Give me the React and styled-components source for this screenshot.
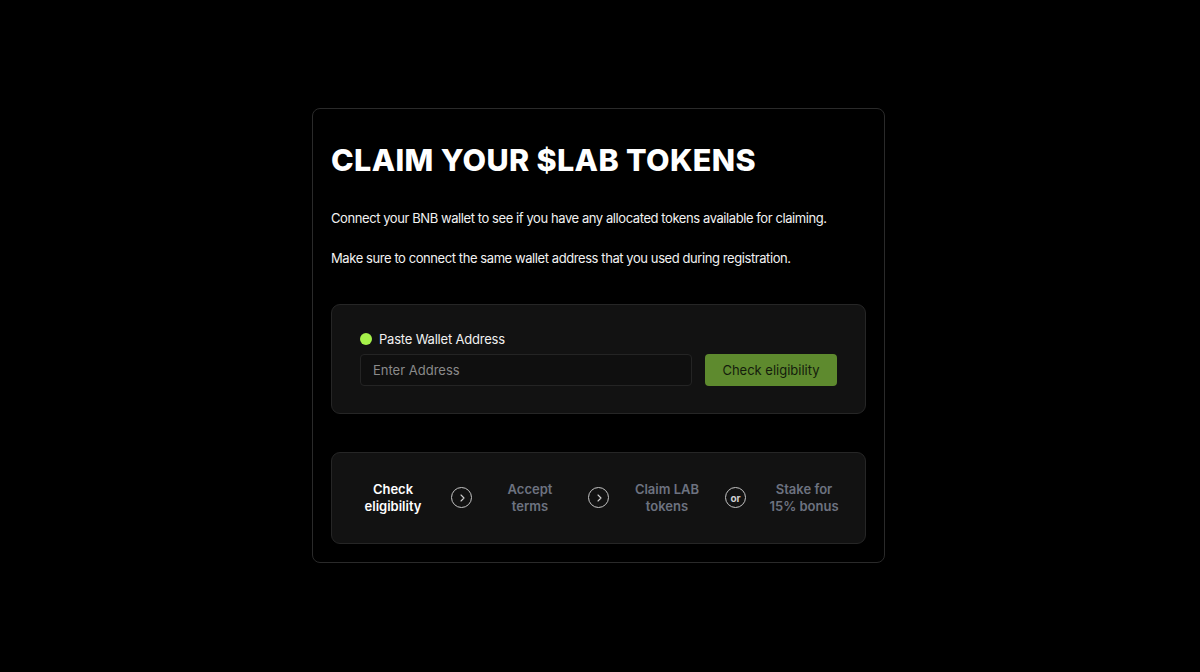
import React from 'react';
import styled, { createGlobalStyle } from 'styled-components';

const GlobalStyle = createGlobalStyle`
  html, body {
    margin: 0;
    padding: 0;
    background: #000;
  }
  body {
    font-family: 'Inter', 'Roboto', sans-serif;
    color: #fff;
  }
`;

const Page = styled.div`
  min-height: 100vh;
  box-sizing: border-box;
  padding: 0 3px 2px 0;
  display: flex;
  align-items: center;
  justify-content: center;
`;

const Card = styled.div`
  width: 573px;
  box-sizing: border-box;
  border: 1px solid #2a2a2a;
  border-radius: 8px;
  padding: 27px 18px 18px 18px;
  background: #000;
`;

const Title = styled.h1`
  margin: 0;
  font-size: 30.5px;
  line-height: 48px;
  font-weight: 800;
  letter-spacing: 0.35px;
  color: #fff;
`;

const Text = styled.p`
  margin: ${(p) => (p.$first ? '24px' : '20px')} 0 0 0;
  font-size: 13px;
  line-height: 20px;
  letter-spacing: -0.42px;
  color: #f2f2f2;
`;

const Panel = styled.div`
  box-sizing: border-box;
  background: #121212;
  border: 1px solid #262626;
  border-radius: 9px;
`;

const WalletPanel = styled(Panel)`
  margin-top: 36px;
  padding: 26px 28px 27px 28px;
`;

const Label = styled.div`
  display: flex;
  align-items: center;
  gap: 7px;
  font-size: 13px;
  line-height: 17px;
  letter-spacing: -0.2px;
  color: #f0f0f0;
`;

const Dot = styled.span`
  width: 12px;
  height: 12px;
  border-radius: 50%;
  background: #a6f14a;
`;

const InputRow = styled.div`
  display: flex;
  gap: 13px;
  margin-top: 6px;
`;

const Input = styled.input`
  flex: 1;
  height: 32px;
  box-sizing: border-box;
  background: #0f0f0f;
  border: 1px solid #242424;
  border-radius: 4px;
  padding: 0 12px;
  font-family: inherit;
  font-size: 13px;
  color: #fff;
  outline: none;
  &::placeholder {
    color: #8a8a8a;
  }
`;

const Button = styled.button`
  width: 132px;
  height: 32px;
  border: none;
  border-radius: 4px;
  background: #5e8a2e;
  color: #141c0c;
  font-family: inherit;
  font-size: 13px;
  cursor: pointer;
`;

const StepsPanel = styled(Panel)`
  margin-top: 38px;
  height: 92px;
  display: flex;
  align-items: center;
  justify-content: center;
  gap: 22px;
`;

const Step = styled.div`
  width: 72px;
  text-align: center;
  font-size: 13px;
  line-height: 17px;
  font-weight: 600;
  color: ${(p) => (p.$active ? '#fff' : '#6d7280')};
`;

const Circle = styled.div`
  width: 21px;
  height: 21px;
  box-sizing: border-box;
  flex-shrink: 0;
  border: 1.5px solid #c4c4c4;
  border-radius: 50%;
  display: flex;
  align-items: center;
  justify-content: center;
  font-size: 10px;
  font-weight: 700;
  color: #d0d0d0;
`;

const Chevron = () => (
  <svg width="10" height="10" viewBox="0 0 10 10" fill="none">
    <path d="M4 2 L7 5 L4 8" stroke="#d0d0d0" strokeWidth="1.1" strokeLinecap="round" strokeLinejoin="round" />
  </svg>
);

const App = () => (
  <>
    <GlobalStyle />
    <Page>
      <Card>
        <Title>CLAIM YOUR $LAB TOKENS</Title>
        <Text $first>
          Connect your BNB wallet to see if you have any allocated tokens available for claiming.
        </Text>
        <Text>Make sure to connect the same wallet address that you used during registration.</Text>
        <WalletPanel>
          <Label>
            <Dot />
            Paste Wallet Address
          </Label>
          <InputRow>
            <Input placeholder="Enter Address" />
            <Button>Check eligibility</Button>
          </InputRow>
        </WalletPanel>
        <StepsPanel>
          <Step $active>Check eligibility</Step>
          <Circle><Chevron /></Circle>
          <Step>Accept terms</Step>
          <Circle><Chevron /></Circle>
          <Step>Claim LAB tokens</Step>
          <Circle>or</Circle>
          <Step>Stake for 15% bonus</Step>
        </StepsPanel>
      </Card>
    </Page>
  </>
);

export default App;
